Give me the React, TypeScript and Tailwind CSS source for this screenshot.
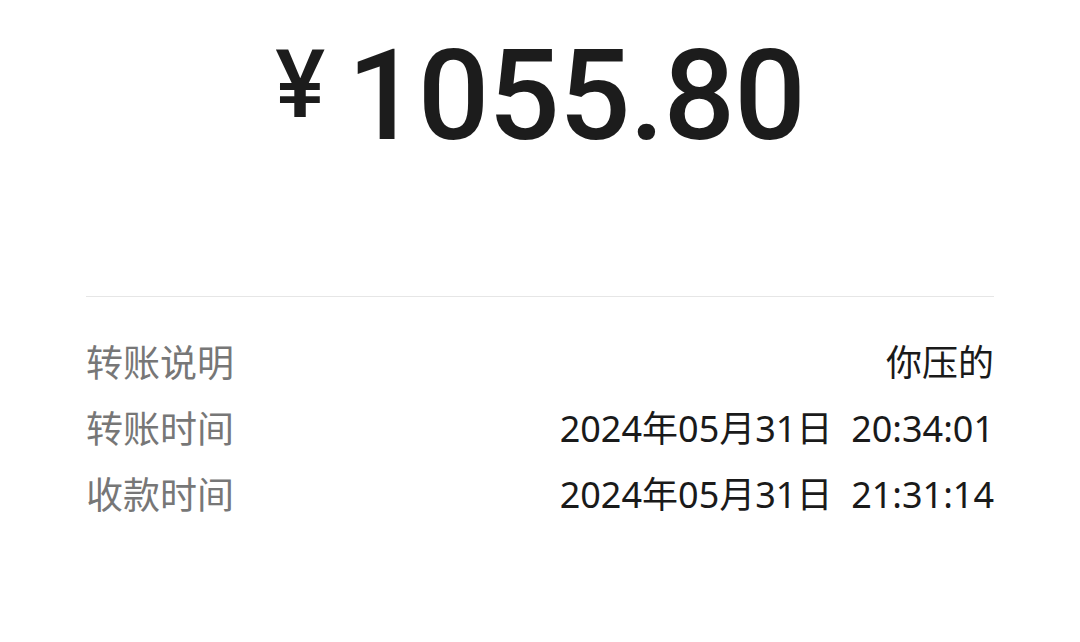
import React from "react";

const rows = [
  { label: "转账说明", value: "你压的" },
  { label: "转账时间", value: "2024年05月31日  20:34:01" },
  { label: "收款时间", value: "2024年05月31日  21:31:14" },
];

const cjk = { fontFamily: '"Noto Sans", "Noto Sans CJK SC", sans-serif' };

export default function App() {
  return (
    <div className="w-[1080px] h-[642px] bg-white overflow-hidden">
      {/* Amount */}
      <div
        className="flex items-start justify-center pt-[33px] text-[#1c1c1c]"
        style={{ fontFamily: "Roboto, sans-serif" }}
      >
        <span className="text-[94px] leading-none font-medium mt-[5px] mr-[22px]">¥</span>
        <span className="text-[126px] leading-none font-medium tracking-[-1px]">1055.80</span>
      </div>

      {/* Divider */}
      <div className="mx-[86px] mt-[137px] border-t border-[#e6e6e6]" />

      {/* Details */}
      <div className="mx-[86px] mt-[33px] flex flex-col" style={cjk}>
        {rows.map((r) => (
          <div key={r.label} className="flex justify-between items-center h-[66px]">
            <span className="text-[37px] text-[#777777]">{r.label}</span>
            <span className="text-[36px] text-[#1a1a1a] whitespace-pre">{r.value}</span>
          </div>
        ))}
      </div>
    </div>
  );
}
